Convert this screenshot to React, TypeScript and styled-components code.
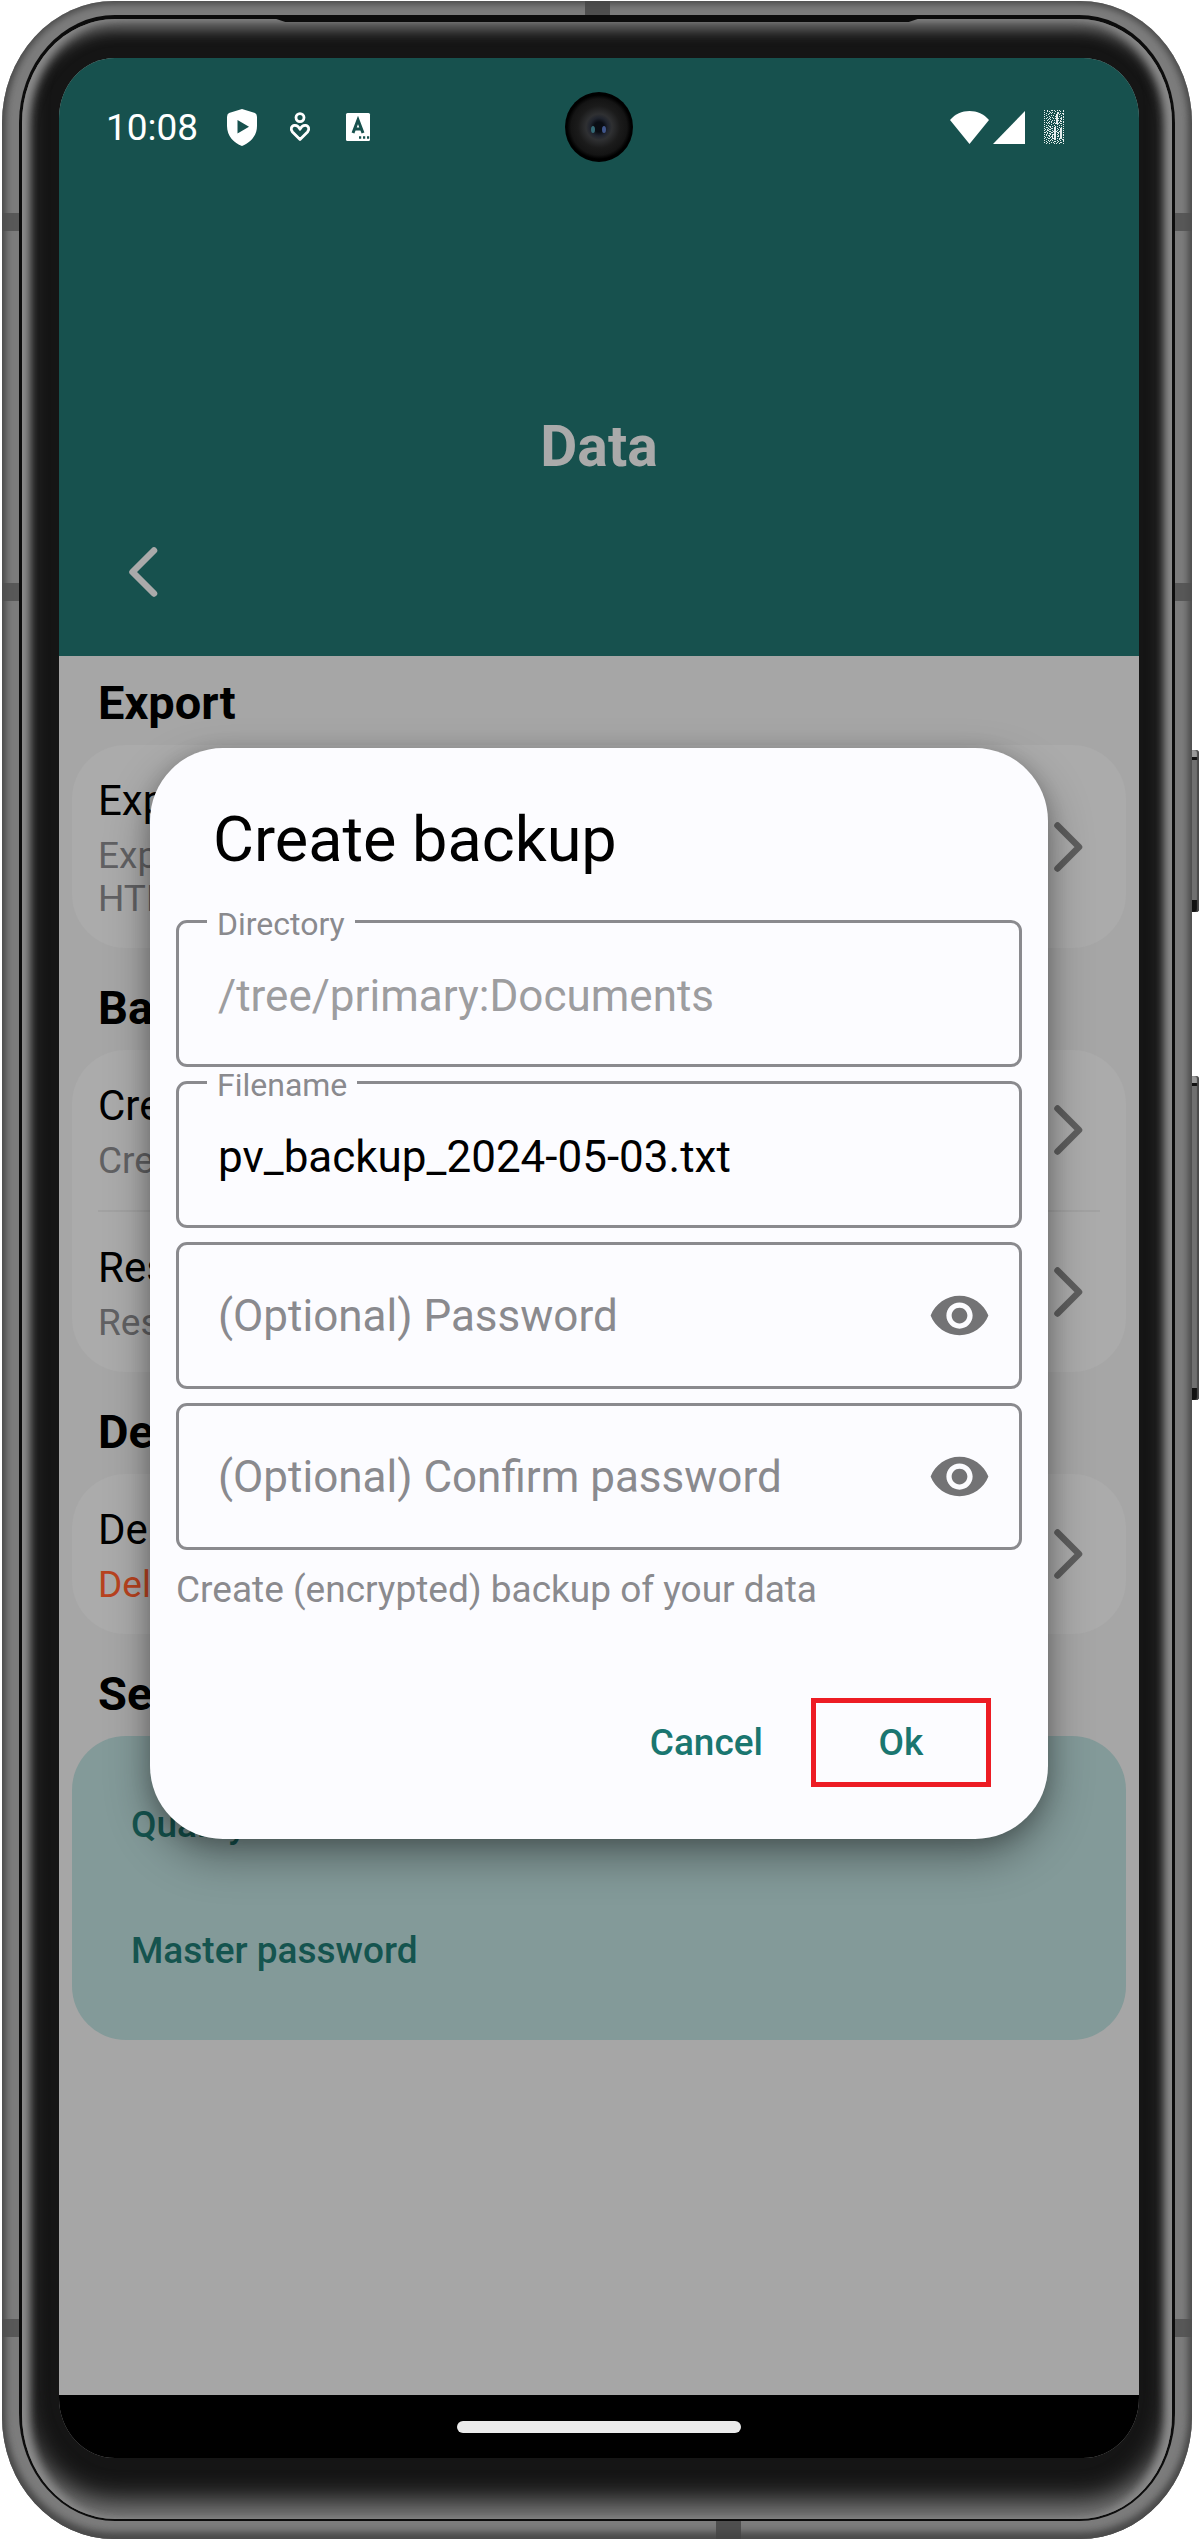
import React from "react";
import styled, { createGlobalStyle } from "styled-components";

const GlobalStyle = createGlobalStyle`
  *, *::before, *::after { box-sizing: border-box; }
  body {
    margin: 0;
    background: #fff;
    font-family: Roboto, "Liberation Sans", sans-serif;
  }
  button, input { font-family: inherit; }
`;

/* ---------- phone hardware ---------- */

const Stage = styled.div`
  display: flex;
  min-height: 100vh;
  padding: 1px 8px 2px 2px;
`;

const Metal = styled.div`
  position: relative;
  flex: 1;
  display: flex;
  padding: 14px 17px 18px;
  border-radius: 112px / 122px;
  background: #7c7c7c;
  box-shadow: inset 0 0 7px 3px #4a4a4a, inset 0 -6px 8px #4a4a4a;
`;

const Band = styled.span<{ $side: "left" | "right" }>`
  position: absolute;
  ${(p) => p.$side}: 0;
  width: 17px;
  height: 18px;
  background: #4f4f4f;
  opacity: 0.8;
`;

const EdgeBand = styled.span<{ $edge: "top" | "bottom" }>`
  position: absolute;
  ${(p) => p.$edge}: 0;
  left: ${(p) => (p.$edge === "top" ? "49%" : "60%")};
  width: 25px;
  height: ${(p) => (p.$edge === "top" ? 14 : 18)}px;
  background: #444;
  opacity: 0.8;
`;

const SideKey = styled.span<{ $top: number; $height: number }>`
  position: absolute;
  right: -7px;
  top: ${(p) => p.$top}px;
  width: 7px;
  height: ${(p) => p.$height}px;
  border-radius: 0 3px 3px 0;
  background: linear-gradient(
    to bottom,
    #9a9a9a 0 7px,
    #111 7px 10px,
    #707070 10px calc(100% - 12px),
    #111 calc(100% - 12px)
  );
  box-shadow: inset -2px 0 1px #4a4a4a;
`;

const Seam = styled.div`
  position: relative;
  flex: 1;
  display: flex;
  padding: 4px 3px 2px;
  border-radius: 96px / 108px;
  background: #0c0c0c;
`;

const EarSlot = styled.span`
  position: absolute;
  z-index: 1;
  top: 3px;
  left: 22%;
  right: 22%;
  height: 4px;
  background: #0c0c0c;
  clip-path: polygon(0 0, 100% 0, calc(100% - 12px) 100%, 12px 100%);
`;

const Bezel = styled.div`
  flex: 1;
  display: flex;
  padding: 39px 33px 61px 37px;
  border-radius: 93px / 104px;
  background: #151515;
  box-shadow: inset 9px 0 8px -2px #8c8c8c, inset -9px 0 8px -2px #8c8c8c,
    inset 0 10px 15px #767676, inset 0 -20px 26px -2px #7c7c7c;
`;

const Screen = styled.div`
  position: relative;
  flex: 1;
  display: flex;
  flex-direction: column;
  overflow: hidden;
  border-radius: 56px / 60px;
  background: #a6a6a6;
`;

const Camera = styled.span`
  position: absolute;
  z-index: 3;
  top: 34px;
  left: calc(50% - 34px);
  width: 68px;
  height: 70px;
  border-radius: 50%;
  background: radial-gradient(
    circle,
    #0a0d14 0 5px,
    #20242e 9px,
    #2f3032 13px,
    #1b1b1b 21px,
    #141414 28px,
    #000 32px
  );

  &::before,
  &::after {
    content: "";
    position: absolute;
    top: 34px;
    left: 26px;
    width: 4px;
    height: 7px;
    border-radius: 50%;
    background: #356a76;
  }
  &::after {
    left: 37px;
    background: #40568c;
  }
`;

/* ---------- app page ---------- */

const StatusBar = styled.div`
  display: flex;
  align-items: center;
  gap: 22px;
  height: 132px;
  padding: 6px 75px 0 47px;
  color: #fff;
`;

const Clock = styled.time`
  margin-right: 4px;
  padding-top: 2px;
  font-size: 37px;
  line-height: 44px;
`;

const Signals = styled.div`
  display: flex;
  align-items: center;
  gap: 4px;
  margin-left: auto;
`;

const Battery = styled.svg`
  margin-left: 15px;
`;

const Header = styled.header`
  padding-bottom: 42px;
  background: #17514e;
  color: #aaa;
`;

const PageTitle = styled.h1`
  margin: 222px 0 48px;
  font-size: 57px;
  line-height: 70px;
  font-weight: 700;
  text-align: center;
`;

const BackButton = styled.button`
  display: block;
  width: 84px;
  height: 84px;
  margin-left: 42px;
  padding: 0;
  border: 0;
  background: none;
  color: inherit;
`;

const Main = styled.main`
  flex: 1;
`;

const Section = styled.section`
  padding: 19px 13px 13px;
`;

const SectionTitle = styled.h2`
  margin: 0 26px 14px;
  color: #000;
  font-size: 47px;
  line-height: 56px;
  font-weight: 700;
`;

const Card = styled.div`
  border-radius: 54px;
  background: #ababab;
`;

const Row = styled.button`
  display: flex;
  align-items: center;
  width: 100%;
  padding: 28px 43px 28px 26px;
  border: 0;
  background: none;
  text-align: left;
`;

const RowText = styled.span`
  flex: 1;
  display: flex;
  flex-direction: column;
  gap: 5px;
`;

const RowTitle = styled.span`
  color: #000;
  font-size: 42px;
  line-height: 56px;
`;

const RowNote = styled.span<{ $danger?: boolean }>`
  color: ${(p) => (p.$danger ? "#b8431f" : "#616163")};
  font-size: 37px;
  line-height: 43px;
`;

const Divider = styled.hr`
  height: 2px;
  margin: 0 26px;
  border: 0;
  background: #a2a2a2;
`;

const LinkCard = styled.div`
  display: flex;
  flex-direction: column;
  padding: 26px 32px;
  border-radius: 54px;
  background: #839a99;
`;

const LinkButton = styled.button`
  height: 126px;
  padding: 0 27px;
  border: 0;
  background: none;
  color: #15544f;
  font-size: 37px;
  line-height: 44px;
  font-weight: 500;
  text-align: left;
`;

const NavBar = styled.div`
  display: flex;
  align-items: center;
  justify-content: center;
  height: 63px;
  background: #000;
`;

const NavPill = styled.span`
  width: 284px;
  height: 12px;
  border-radius: 6px;
  background: #ebebeb;
`;

/* ---------- dialog ---------- */

const Overlay = styled.div`
  position: absolute;
  z-index: 2;
  inset: 134px 0 63px;
  display: flex;
  align-items: center;
  padding: 0 91px;
`;

const Dialog = styled.div`
  flex: 1;
  padding: 54px 26px 52px;
  border-radius: 73px;
  background: #fcfcff;
  box-shadow: 0 18px 44px rgba(0, 0, 0, 0.36), 0 4px 20px rgba(0, 0, 0, 0.18);
`;

const DialogTitle = styled.h2`
  margin: 0 37px 42px;
  color: #000;
  font-size: 63px;
  line-height: 76px;
  font-weight: 400;
`;

const Fields = styled.div`
  display: flex;
  flex-direction: column;
  gap: 14px;
`;

const Field = styled.div`
  position: relative;
  display: flex;
  align-items: center;
  height: 147px;
  padding: 0 28px 0 39px;
  border: 3px solid #8a8a8e;
  border-radius: 11px;
`;

const FieldLabel = styled.label`
  position: absolute;
  top: -14px;
  left: 28px;
  padding: 0 10px;
  background: #fcfcff;
  color: #8a8a8e;
  font-size: 32px;
  line-height: 30px;
`;

const FieldInput = styled.input<{ $labelled?: boolean }>`
  flex: 1;
  min-width: 0;
  height: 60px;
  margin-top: ${(p) => (p.$labelled ? 4 : 0)}px;
  padding: 0;
  border: 0;
  outline: 0;
  background: none;
  color: #000;
  font-size: 44px;

  &::placeholder {
    color: #8a8a8e;
    opacity: 1;
  }
  &:disabled {
    color: #9d9d9f;
  }
`;

const EyeButton = styled.button`
  display: flex;
  padding: 0;
  border: 0;
  background: none;
  color: #737375;
`;

const Helper = styled.p`
  margin: 18px 0 86px;
  color: #8a8a8e;
  font-size: 37px;
  line-height: 44px;
`;

const Actions = styled.div`
  display: flex;
  justify-content: flex-end;
  gap: 16px;
  padding-right: 31px;
`;

const ActionButton = styled.button<{ $marked?: boolean }>`
  height: 89px;
  min-width: ${(p) => (p.$marked ? 180 : 176)}px;
  padding: 0 32px;
  border: ${(p) => (p.$marked ? "5px solid #ed1c24" : "0")};
  background: none;
  color: #1a7670;
  font-size: 37px;
  line-height: 44px;
  font-weight: 500;
`;

/* ---------- drawings ---------- */

const Chevron = ({ back }: { back?: boolean }) =>
  back ? (
    <svg width="84" height="84" viewBox="0 0 84 84" fill="none" aria-hidden="true">
      <path
        d="M53 20.5 31.5 42 53 63.5"
        stroke="currentColor"
        strokeWidth="6.5"
        strokeLinecap="round"
        strokeLinejoin="round"
      />
    </svg>
  ) : (
    <svg width="29" height="50" viewBox="0 0 29 50" fill="none" aria-hidden="true">
      <path
        d="M3.5 3.5 25 25 3.5 46.5"
        stroke="#5e5e5e"
        strokeWidth="6.5"
        strokeLinecap="round"
        strokeLinejoin="round"
      />
    </svg>
  );

const Eye = () => (
  <svg width="63" height="63" viewBox="0 0 24 24" fill="currentColor" aria-hidden="true">
    <path d="M12 4.5C7 4.5 2.73 7.61 1 12c1.73 4.39 6 7.5 11 7.5s9.27-3.11 11-7.5c-1.73-4.39-6-7.5-11-7.5zM12 17c-2.76 0-5-2.24-5-5s2.24-5 5-5 5 2.24 5 5-2.24 5-5 5zm0-8c-1.66 0-3 1.34-3 3s1.34 3 3 3 3-1.34 3-3-1.34-3-3-3z" />
  </svg>
);

const Shield = () => (
  <svg width="36" height="37" viewBox="0 0 36 37" aria-hidden="true">
    <path
      fill="#fff"
      fillRule="evenodd"
      d="M18 0 L31 4 Q33 5 33 8 V17 C33 27 26 34 18 37 C10 34 3 27 3 17 V8 Q3 5 5 4 Z M13.5 11 V24.5 L25 17.8 Z"
    />
  </svg>
);

const PersonHeart = () => (
  <svg width="36" height="30" viewBox="0 0 36 30" fill="none" stroke="#fff" strokeWidth="2.8" aria-hidden="true">
    <circle cx="18" cy="5.6" r="4" />
    <path
      strokeLinejoin="round"
      d="M18 27.5 L10.5 20 C8 17 9.5 13.5 12.5 13.3 C15 13.1 17 15 18 17.2 C19 15 21 13.1 23.5 13.3 C26.5 13.5 28 17 25.5 20 Z"
    />
  </svg>
);

const LetterTile = () => (
  <svg width="36" height="28" viewBox="0 0 36 28" aria-hidden="true">
    <rect x="6" y="0" width="24" height="28" rx="1.5" fill="#fff" />
    <path d="M13 20 L18 7 L23 20 M14.8 16 H21.2" fill="none" stroke="#17514e" strokeWidth="3" />
    <path d="M19 24.5 h2.2 M23 24.5 h2.2 M27 24.5 h2.2" stroke="#17514e" strokeWidth="2.4" />
  </svg>
);

const Wifi = () => (
  <svg width="39" height="33" viewBox="0 0 39 33" aria-hidden="true">
    <path fill="#fff" d="M19.5 33 L0 9 C5 3 12 0 19.5 0 C27 0 34 3 39 9 Z" />
  </svg>
);

const Cell = () => (
  <svg width="32" height="33" viewBox="0 0 32 33" aria-hidden="true">
    <path fill="#fff" d="M32 0 V33 H0 Z" />
  </svg>
);

/* Dithered battery glyph: one character per device pixel. */
const batteryDots = [
  "#..#...##.#..#.#...#",
  "...#.#.....#....#..#",
  "#.....#.#....##.....",
  "..#..#.#..#..##.#.##",
  "#...#.......##.#...#",
  "..#....#.#..##...#..",
  "#....#.....###.#...#",
  "...#..#.#...##...#.#",
  "#.#..#...#.####.##..",
  "....#.#.....##...#.#",
  "#..#....#.#.###.#...",
  ".....#.#....##..##.#",
  "#.#.#..#..#.##.#...#",
  "...#.#...#.####.##..",
  "#......#.....#.....#",
  "..#.#.....#....#.#..",
  "#....##.#..#.#.....#",
  "..##..#...##...#.#..",
  "#...#..##.##.#..##.#",
  ".#.#.##...##..#.##..",
  "#..##...#.##.#..##.#",
  "..#..##..####..###..",
  "##.#...##.##.##.##.#",
  "...#.##...##..#.##..",
  "#.#...#.####.#..##.#",
  "..#.##..#.##..#.##.#",
  "#....#.##.##.##.##..",
  ".#.#..#.#.##....##.#",
  "#...##..####.#.###..",
  "..#....#..##...#..##",
  "#...#.#.#....#..#..#",
  "..#..#....##..#....#",
  "#..#...#.#...#..##..",
  "..#..#....#.#..#...#",
];

const BatteryGlyph = () => (
  <Battery width="20" height="34" viewBox="0 0 20 34" shapeRendering="crispEdges" aria-hidden="true">
    {batteryDots.flatMap((line, y) =>
      [...line].map((dot, x) =>
        dot === "#" ? <rect key={`${x}-${y}`} x={x} y={y} width="1" height="1" fill="#e4eeed" /> : null
      )
    )}
  </Battery>
);

/* ---------- pieces ---------- */

type ItemProps = { title: string; notes: string[]; danger?: boolean };

const Item = ({ title, notes, danger }: ItemProps) => (
  <Row type="button">
    <RowText>
      <RowTitle>{title}</RowTitle>
      <RowNote $danger={danger}>
        {notes.map((note, i) => (
          <React.Fragment key={note}>
            {i > 0 && <br />}
            {note}
          </React.Fragment>
        ))}
      </RowNote>
    </RowText>
    <Chevron />
  </Row>
);

const PasswordField = ({ id, hint }: { id: string; hint: string }) => (
  <Field>
    <FieldInput id={id} type="password" placeholder={hint} aria-label={hint} />
    <EyeButton type="button" aria-label={`Show ${hint}`}>
      <Eye />
    </EyeButton>
  </Field>
);

export default function App() {
  return (
    <>
      <GlobalStyle />
      <Stage>
        <Metal>
          {[212, 582, 2318].map((top) => (
            <React.Fragment key={top}>
              <Band $side="left" style={{ top }} />
              <Band $side="right" style={{ top }} />
            </React.Fragment>
          ))}
          <EdgeBand $edge="top" />
          <EdgeBand $edge="bottom" />
          <SideKey $top={749} $height={162} />
          <SideKey $top={1075} $height={324} />
          <Seam>
            <EarSlot />
            <Bezel>
              <Screen>
                <Camera />
                <Header>
                  <StatusBar>
                    <Clock>10:08</Clock>
                    <Shield />
                    <PersonHeart />
                    <LetterTile />
                    <Signals>
                      <Wifi />
                      <Cell />
                      <BatteryGlyph />
                    </Signals>
                  </StatusBar>
                  <PageTitle>Data</PageTitle>
                  <BackButton type="button" aria-label="Back">
                    <Chevron back />
                  </BackButton>
                </Header>
                <Main>
                  <Section>
                    <SectionTitle>Export</SectionTitle>
                    <Card>
                      <Item title="Export" notes={["Export", "HTML"]} />
                    </Card>
                  </Section>
                  <Section>
                    <SectionTitle>Backup</SectionTitle>
                    <Card>
                      <Item title="Create" notes={["Create"]} />
                      <Divider />
                      <Item title="Restore" notes={["Restore"]} />
                    </Card>
                  </Section>
                  <Section>
                    <SectionTitle>Delete</SectionTitle>
                    <Card>
                      <Item title="Delete" notes={["Delete"]} danger />
                    </Card>
                  </Section>
                  <Section>
                    <SectionTitle>Settings</SectionTitle>
                    <LinkCard>
                      <LinkButton type="button">Quality Guide</LinkButton>
                      <LinkButton type="button">Master password</LinkButton>
                    </LinkCard>
                  </Section>
                </Main>
                <NavBar>
                  <NavPill />
                </NavBar>
                <Overlay>
                  <Dialog role="dialog" aria-labelledby="backup-title">
                    <DialogTitle id="backup-title">Create backup</DialogTitle>
                    <Fields>
                      <Field>
                        <FieldLabel htmlFor="directory">Directory</FieldLabel>
                        <FieldInput
                          id="directory"
                          $labelled
                          disabled
                          defaultValue="/tree/primary:Documents"
                        />
                      </Field>
                      <Field>
                        <FieldLabel htmlFor="filename">Filename</FieldLabel>
                        <FieldInput id="filename" $labelled defaultValue="pv_backup_2024-05-03.txt" />
                      </Field>
                      <PasswordField id="password" hint="(Optional) Password" />
                      <PasswordField id="confirm" hint="(Optional) Confirm password" />
                    </Fields>
                    <Helper>Create (encrypted) backup of your data</Helper>
                    <Actions>
                      <ActionButton type="button">Cancel</ActionButton>
                      <ActionButton type="button" $marked>
                        Ok
                      </ActionButton>
                    </Actions>
                  </Dialog>
                </Overlay>
              </Screen>
            </Bezel>
          </Seam>
        </Metal>
      </Stage>
    </>
  );
}
